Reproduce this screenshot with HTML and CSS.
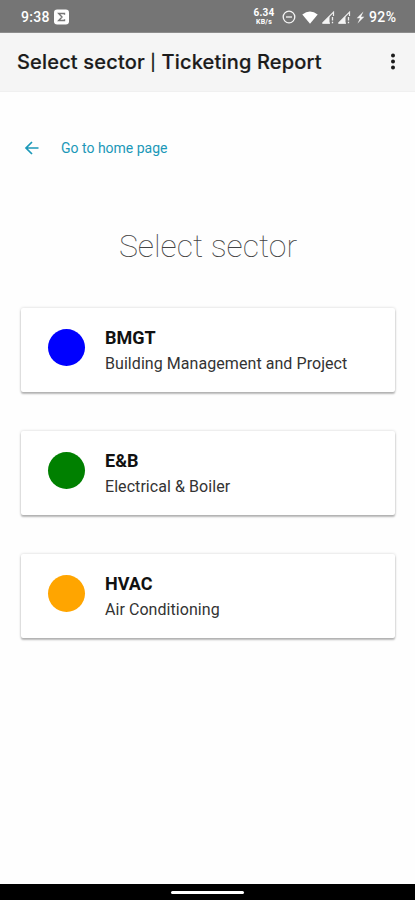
FILE: index.html
```html
<!DOCTYPE html>
<html lang="en">
<head>
<meta charset="utf-8">
<title>Select sector | Ticketing Report</title>
<meta name="viewport" content="width=device-width, initial-scale=1">
<link rel="stylesheet" href="styles.css">
</head>
<body>
<div class="status">
  <span class="clock">9:38</span>
  <svg class="sigma" width="15" height="16" viewBox="0 0 15 16"><rect y=".5" width="15" height="15" rx="3.2" fill="#fff"/><path d="M10.500 5.800V4.500H4.700L8 8l-3.300 3.500h5.800v-1.300" fill="none" stroke="#777" stroke-width="1.400"/></svg>
  <div class="speed"><span>6.34</span><span class="unit">KB/s</span></div>
  <svg class="dnd" width="14" height="14" viewBox="0 0 14 14" fill="none" stroke="#f4f4f4" stroke-width="1.3"><circle cx="7" cy="7" r="5.8"/><path d="M4 7h6"/></svg>
  <svg class="wifi" width="16" height="13" viewBox="0 0 16 13"><path d="M.3 3.4Q8-2.6 15.700 3.400L8 12.700Z" fill="#fff"/></svg>
  <svg class="signal" width="14" height="13" viewBox="0 0 14 13"><path d="M1.500 12.200 12.500 1.200V5M1.500 12.200H9" fill="none" stroke="#eee" stroke-width="1.200"/><path d="M1 12.500 8.500 5V12.500Z" fill="#f4f4f4"/><path d="M11.500 6v3.500M11.500 10.700v1.600" stroke="#eee" stroke-width="1.300"/></svg>
  <svg class="signal second" width="14" height="13" viewBox="0 0 14 13"><path d="M1.500 12.200 12.500 1.200V5M1.500 12.200H9" fill="none" stroke="#eee" stroke-width="1.200"/><path d="M1 12.500 8.500 5V12.500Z" fill="#f4f4f4"/><path d="M11.500 6v3.500M11.500 10.700v1.600" stroke="#eee" stroke-width="1.300"/></svg>
  <svg class="bolt" width="9" height="13" viewBox="0 0 9 13"><path d="M7.500.5.700 7.300H4L1.500 12.500 8.300 5.700H5Z" fill="#f4f4f4"/></svg>
  <span class="battery">92%</span>
</div>
<header class="appbar">
  <h1 class="title">Select sector <span class="bar">|</span> Ticketing Report</h1>
  <svg class="more" width="6" height="18" viewBox="0 0 6 18" fill="#1b1b1b"><circle cx="3" cy="2.500" r="2"/><circle cx="3" cy="8.500" r="2"/><circle cx="3" cy="14.500" r="2"/></svg>
</header>
<main class="page">
  <a class="home">
    <svg width="16" height="14" viewBox="0 0 16 14" fill="none" stroke="#1b98b8" stroke-width="1.700"><path d="M14.500 7H2M8 1 2 7l6 6"/></svg>
    <span>Go to home page</span>
  </a>
  <h2 class="heading">Select sector</h2>
  <div class="cards">
    <section class="card"><i class="dot blue"></i><div><h3>BMGT</h3><p>Building Management and Project</p></div></section>
    <section class="card"><i class="dot green"></i><div><h3>E&amp;B</h3><p>Electrical &amp; Boiler</p></div></section>
    <section class="card"><i class="dot orange"></i><div><h3>HVAC</h3><p>Air Conditioning</p></div></section>
  </div>
</main>
<footer class="nav"><div class="handle"></div></footer>
</body>
</html>
```
FILE: styles.css
```css
* { box-sizing: border-box; margin: 0; padding: 0; }
body { height: 900px; display: flex; flex-direction: column; background: #fefefe; font-family: Roboto, sans-serif; color: #111; overflow: hidden; }
.status { height: 33px; flex: none; display: flex; align-items: center; padding: 2px 17px 0 21px; background: #757575; color: #fff; border-bottom: 1px solid #8d8d8d; }
.clock, .battery { font: 500 14px/16px Roboto, sans-serif; }
.clock { width: 33px; letter-spacing: .3px; }
.battery { width: 29px; font-size: 14px; letter-spacing: .4px; white-space: nowrap; }
.speed { width: 22px; margin-left: auto; margin-right: 7px; display: flex; flex-direction: column; align-items: center; font: 700 10px/10px Roboto, sans-serif; letter-spacing: .2px; }
.unit { font-size: 7px; line-height: 8px; }
.wifi { margin: 0 3px 0 6px; }
.second { margin-left: 2px; }
.bolt { margin: 0 4px 0 5px; }
.appbar { height: 59px; flex: none; display: flex; align-items: center; justify-content: space-between; padding: 0 19px 1px 17px; background: #f5f5f5; border-bottom: 1px solid #f0f0f0; }
.title { font: 500 20px/28px Inter, sans-serif; letter-spacing: .17px; white-space: nowrap; color: #1b1b1b; -webkit-text-stroke: .2px #1b1b1b; }
.bar { font-size: 16px; vertical-align: 1px; line-height: 1; }
.page { flex: 1; padding: 46px 20px 0 21px; }
.home { display: flex; align-items: center; height: 20px; padding-left: 3px; gap: 21px; color: #1b98b8; font-size: 14px; }
.heading { margin-top: 67px; text-align: center; font-size: 32px; line-height: 42px; font-weight: 100; color: #444; }
.cards { display: grid; gap: 39px; margin-top: 41px; }
.card { height: 84px; display: flex; align-items: flex-start; padding: 18px 0 0 27px; background: #fff; border-radius: 2px; box-shadow: 0 2px 2px rgba(0,0,0,.26), 0 0 3px rgba(0,0,0,.18); }
.dot { width: 37px; height: 37px; margin: 3px 20px 0 0; border-radius: 50%; }
.blue { background: #00f; }
.green { background: #008000; }
.orange { background: #ffa500; }
.card h3 { font-size: 18px; line-height: 24px; font-weight: 700; }
.card p { margin-top: 2px; font-size: 16px; line-height: 24px; letter-spacing: .06px; color: #333; white-space: nowrap; }
.nav { height: 16px; flex: none; display: flex; justify-content: center; padding-top: 7px; background: #000; }
.handle { width: 73px; height: 3px; border-radius: 2px; background: #fff; }
```
